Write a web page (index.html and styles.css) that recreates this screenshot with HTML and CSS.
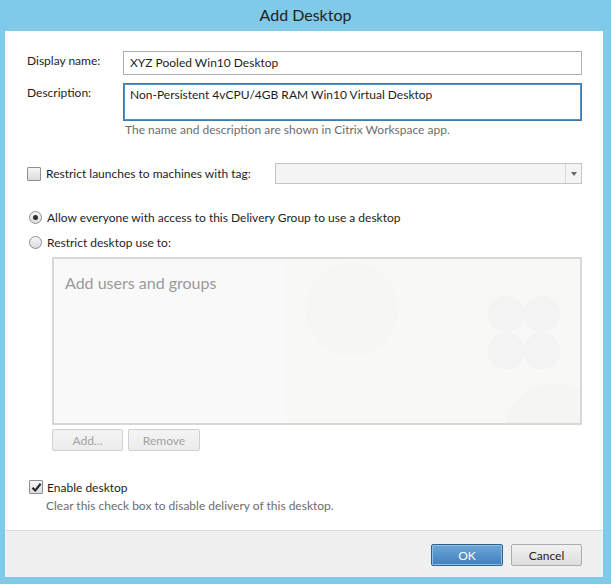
FILE: index.html
```html
<!DOCTYPE html>
<html>
<head>
<meta charset="utf-8">
<link rel="stylesheet" href="styles.css">
</head>
<body>
<div class="window">
  <div class="titlebar">Add Desktop</div>
  <div class="panel">
    <div class="content">
      <div class="form">
        <label class="label">Display name:</label>
        <div class="input">XYZ Pooled Win10 Desktop</div>
        <label class="label label-desc">Description:</label>
        <div class="input textarea">Non-Persistent 4vCPU/4GB RAM Win10 Virtual Desktop</div>
      </div>
      <div class="hint hint-form">The name and description are shown in Citrix Workspace app.</div>

      <div class="tag-row">
        <span class="check"></span>
        <span class="tag-label">Restrict launches to machines with tag:</span>
        <div class="combo"><span class="combo-btn"><span class="arrow"></span></span></div>
      </div>

      <div class="radio-row first"><span class="radio checked"></span><span>Allow everyone with access to this Delivery Group to use a desktop</span></div>
      <div class="radio-row"><span class="radio"></span><span>Restrict desktop use to:</span></div>

      <div class="users">
        <div class="users-placeholder">Add users and groups</div>
      </div>
      <div class="users-buttons">
        <span class="btn disabled btn-add">Add...</span>
        <span class="btn disabled btn-remove">Remove</span>
      </div>

      <div class="enable-row">
        <span class="check checked"><svg width="11" height="11" viewBox="0 0 11 11"><path d="M1.5 5.8 L4.2 8.6 L9.6 1.8" fill="none" stroke="#2b2b2b" stroke-width="2.2" stroke-linejoin="round"/></svg></span>
        <span>Enable desktop</span>
      </div>
      <div class="hint hint-enable">Clear this check box to disable delivery of this desktop.</div>
    </div>
    <div class="footer">
      <span class="btn primary">OK</span>
      <span class="btn cancel">Cancel</span>
    </div>
  </div>
</div>
</body>
</html>
```
FILE: styles.css
```css
* { box-sizing: border-box; }
html, body { margin: 0; padding: 0; }
body {
  background: #7fcae8;
  font-family: "Segoe UI", Lato, "Open Sans", sans-serif;
  font-size: 12px;
  color: #1e1e1e;
}
.window {
  width: 611px;
  height: 584px;
  display: flex;
  flex-direction: column;
}
.titlebar {
  height: 31px;
  line-height: 29px;
  text-align: center;
  font-size: 16px;
  color: #222;
}
.panel {
  flex: 1;
  margin: 0 8px 7px 5px;
  background: #fff;
  display: flex;
  flex-direction: column;
}
.content {
  flex: 1;
  padding: 20px 21px 0 22px;
}
.form {
  display: grid;
  grid-template-columns: 96px 1fr;
  row-gap: 8px;
}
.label {
  line-height: 20px;
}
.input {
  height: 24px;
  border: 1px solid #abadb3;
  padding: 0 6px;
  line-height: 22px;
  background: #fff;
}
.textarea {
  height: 38px;
  border: 1px solid #3c7bb0;
  box-shadow: inset 0 0 0 1px #5b8fbf;
  padding: 2px 6px;
  line-height: 18px;
}
.hint {
  color: #6d6d6d;
  line-height: 15px;
}
.hint-form {
  margin: 1px 0 0 98px;
}
.tag-row {
  margin-top: 26px;
  height: 21px;
  display: flex;
  align-items: center;
}
.check {
  width: 14px;
  height: 14px;
  border: 1px solid #8e8f8f;
  border-radius: 1px;
  background: linear-gradient(#f6f6f6, #dcdcdc);
  display: inline-flex;
  align-items: center;
  justify-content: center;
  margin-right: 5px;
  flex: none;
}
.tag-label {
  width: 229px;
}
.combo {
  flex: 1;
  height: 21px;
  border: 1px solid #c5c5c5;
  background: #f4f4f4;
  display: flex;
  justify-content: flex-end;
}
.combo-btn {
  width: 16px;
  border-left: 1px solid #d9d9d9;
  display: flex;
  align-items: center;
  justify-content: center;
}
.arrow {
  width: 0;
  height: 0;
  border-left: 3.5px solid transparent;
  border-right: 3.5px solid transparent;
  border-top: 4px solid #6a6a6a;
}
.radio-row {
  height: 20px;
  display: flex;
  align-items: center;
  margin-top: 5px;
}
.radio-row.first { margin-top: 23px; }
.radio {
  width: 13px;
  height: 13px;
  border: 1px solid #8e8f8f;
  border-radius: 50%;
  background: linear-gradient(#f6f6f6, #dadada);
  margin-left: 2px;
  margin-right: 5px;
  display: inline-flex;
  align-items: center;
  justify-content: center;
  flex: none;
}
.radio.checked::after {
  content: "";
  width: 5px;
  height: 5px;
  border-radius: 50%;
  background: #2e2e2e;
}
.users {
  margin: 5px 0 0 25px;
  height: 168px;
  border: 2px solid #d8d8d8;
  background-color: #f9f9f9;
  background-image:
    radial-gradient(circle at 298px 50px, #f6f6f4 0 46px, transparent 47px),
    radial-gradient(circle at 452px 55px, #f3f3f4 0 18px, transparent 19px),
    radial-gradient(circle at 488px 55px, #f3f3f4 0 18px, transparent 19px),
    radial-gradient(circle at 452px 92px, #f3f3f4 0 18px, transparent 19px),
    radial-gradient(circle at 488px 92px, #f3f3f4 0 18px, transparent 19px),
    radial-gradient(circle at 500px 175px, #f5f5f3 0 50px, transparent 51px),
    linear-gradient(90deg, transparent 230px, #f8f8f7 230px);
  padding: 14px 0 0 11px;
}
.users-placeholder {
  font-size: 16px;
  line-height: 20px;
  color: #999;
}
.users-buttons {
  margin: 4px 0 0 25px;
  display: flex;
  gap: 5px;
}
.btn {
  height: 22px;
  display: inline-flex;
  align-items: center;
  justify-content: center;
  border: 1px solid #acacac;
  border-radius: 2px;
  background: linear-gradient(#f2f2f2, #dddddd);
  color: #1e1e1e;
}
.btn.disabled {
  border-color: #d0d0d0;
  background: linear-gradient(#f4f4f4, #ececec);
  color: #a2a2a2;
}
.btn-add { width: 71px; }
.btn-remove { width: 72px; }
.enable-row {
  margin-top: 27px;
  height: 18px;
  display: flex;
  align-items: center;
}
.enable-row .check { margin-left: 2px; margin-right: 4px; }
.hint-enable {
  margin: 2px 0 0 19px;
}
.footer {
  height: 47px;
  border-top: 1px solid #dcdcdc;
  background: #f0f0f0;
  display: flex;
  justify-content: flex-end;
  align-items: flex-start;
  gap: 8px;
  padding: 13px 21px 0 0;
}
.btn.primary {
  width: 72px;
  border-color: #2c628b;
  background: linear-gradient(#6ea6d6, #3f80bf);
  color: #fff;
  box-shadow: inset 0 0 0 1px #8fbde3;
}
.btn.cancel {
  width: 71px;
}
```
